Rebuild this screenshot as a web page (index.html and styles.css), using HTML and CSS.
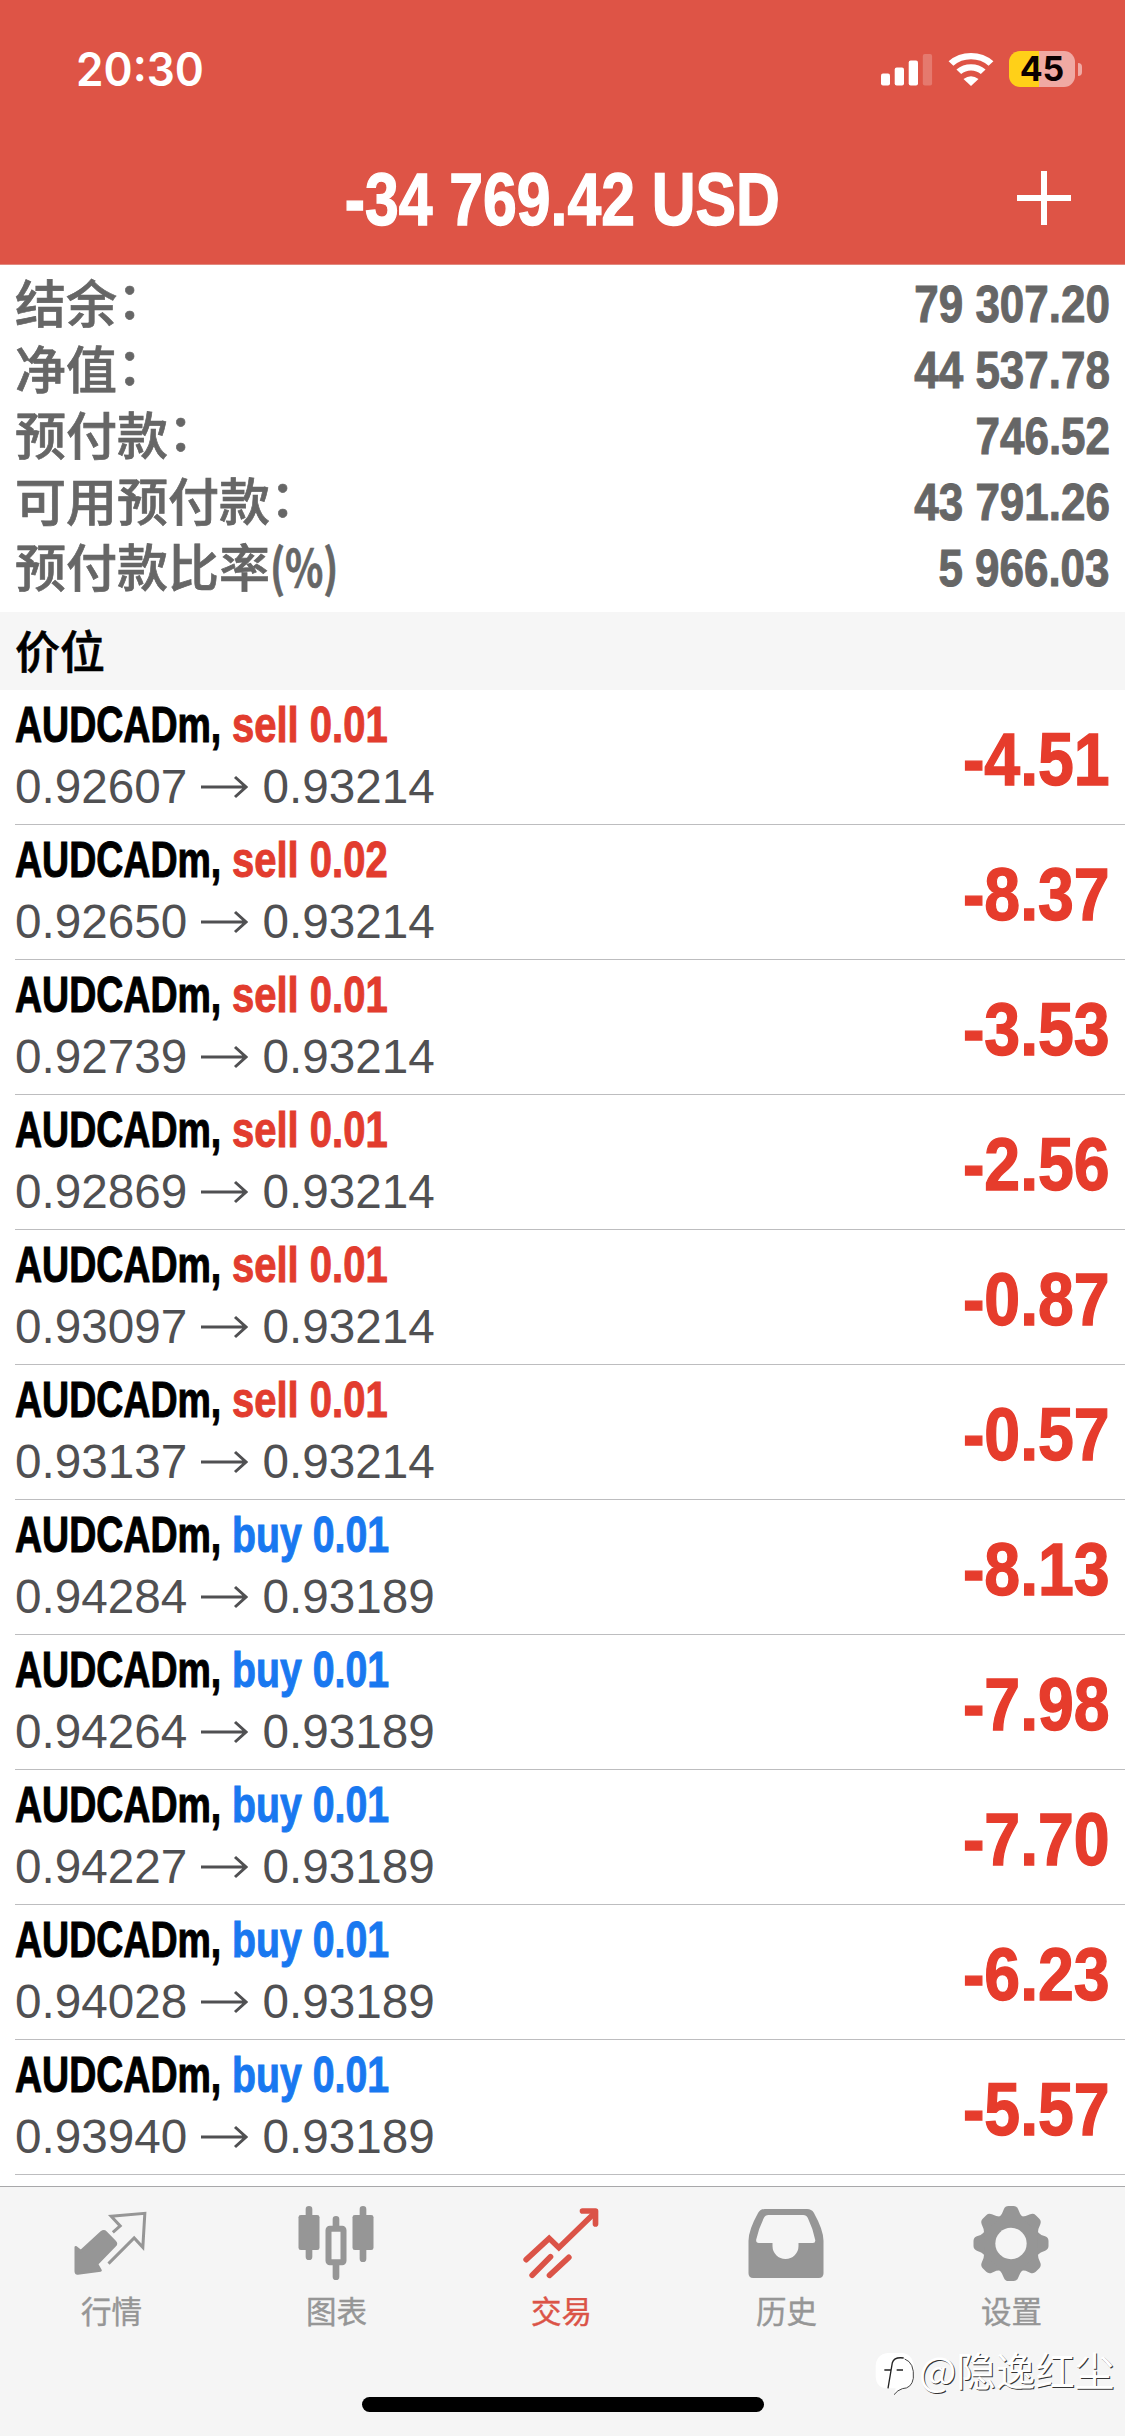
FILE: index.html
```html
<!DOCTYPE html>
<html lang="zh-CN">
<head>
<meta charset="utf-8">
<title>交易</title>
<link rel="stylesheet" href="styles.css">
</head>
<body>
<header class="header">
  <div class="status">
    <span class="time">20:30</span>
    <div class="indicators">
      <svg class="signal" width="52" height="33" viewBox="0 0 52 33" fill="#fff"><rect x="0" y="20.500" width="9" height="12" rx="2"/><rect x="13.700" y="14.500" width="9.300" height="18" rx="2"/><rect x="27.700" y="7.500" width="9.300" height="25" rx="2"/><rect x="41.800" y="1" width="9.300" height="31.500" rx="2" opacity=".22"/></svg>
      <svg class="wifi" width="46" height="34" viewBox="0 0 46 37" preserveAspectRatio="none"><g fill="none" stroke="#fff" stroke-width="7"><path d="M3 12.500A29 29 0 0 1 43 12.500"/><path d="M10.800 21.500A18 18 0 0 1 35.200 21.500"/></g><path fill="#fff" d="M15.500 29.500Q23 23.500 30.500 29.500L23 37Z"/></svg>
      <div class="battery"><span class="level">45</span></div>
      <i class="nub"></i>
    </div>
  </div>
  <div class="titlebar">
    <h1 class="title">-34 769.42 USD</h1>
    <svg class="plus" width="54" height="54" viewBox="0 0 54 54" stroke="#fff" stroke-width="6"><path d="M0 27H54M27 0V54"/></svg>
  </div>
</header>

<section class="summary">
  <div class="sum-row"><span class="label">结余<b class="colon">：</b></span><span class="value">79 307.20</span></div>
  <div class="sum-row"><span class="label">净值<b class="colon">：</b></span><span class="value">44 537.78</span></div>
  <div class="sum-row"><span class="label">预付款<b class="colon">：</b></span><span class="value">746.52</span></div>
  <div class="sum-row"><span class="label">可用预付款<b class="colon">：</b></span><span class="value">43 791.26</span></div>
  <div class="sum-row"><span class="label">预付款比率<b class="percent">(%)</b></span><span class="value">5 966.03</span></div>
</section>

<h2 class="section">价位</h2>

<main class="positions" id="positions"></main>

<nav class="tabs">
  <div class="tab">
    <svg width="80" height="85" viewBox="217.500 120 240 255"><path fill="#969696" stroke="#969696" stroke-width="8" stroke-linejoin="round" d="M229 262L244 274L306 217Q313 211 319 217L346 245Q352 251 346 257L292 312L303 331L235 340Q229 341 229 334Z"/><path fill="none" stroke="#969696" stroke-width="9" d="M340 217L362 198L335 169L436 160L430 262L404 234L327 311"/></svg>
    <span>行情</span>
  </div>
  <div class="tab">
    <svg width="80" height="85" viewBox="892.500 120 240 255"><g stroke="#969696" stroke-width="20" stroke-linecap="round" fill="none"><path d="M928.500 148V290M1009.500 178V202M1009.500 312V350M1090.500 148V296"/></g><g fill="#969696"><rect x="897" y="165" width="63" height="105" rx="7"/><rect x="1059" y="165" width="63" height="105" rx="7"/></g><rect x="987" y="206.500" width="45" height="100" rx="4" fill="#f5f5f5" stroke="#969696" stroke-width="18"/></svg>
    <span>图表</span>
  </div>
  <div class="tab active">
    <svg width="80" height="85" viewBox="367.500 120 240 255"><g fill="none" stroke="#db5347" stroke-width="17" stroke-linecap="round"><path d="M380 299L449 235L478 263L586 158"/><path d="M549 153H588V192" stroke-linejoin="round"/><path d="M398 346L453 290M450 346L508 292"/></g></svg>
    <span>交易</span>
  </div>
  <div class="tab">
    <svg width="80" height="85" viewBox="67.500 120 240 255"><path fill="#969696" fill-rule="evenodd" d="M121 147H248Q261 147 268 158Q297 210 297 242V340Q297 354 283 354H86Q72 354 72 340V242Q72 210 101 158Q108 147 121 147ZM132 165Q122 165 118 174Q102 207 95 239Q94 249 103 249H144V258A39 39 0 0 0 222 258V249H265Q274 249 272 239Q265 205 250 174Q246 165 236 165Z"/></svg>
    <span>历史</span>
  </div>
  <div class="tab">
    <svg width="80" height="85" viewBox="742.500 120 240 255"><g fill="#969696"><circle cx="859.500" cy="250.500" r="88"/><g id="teeth"><path id="tooth" d="M824 172Q834 162 838 148Q842 138 852 138H867Q877 138 881 148Q885 162 895 172Z"/><use href="#tooth" transform="rotate(45 859.500 250.500)"/><use href="#tooth" transform="rotate(90 859.500 250.500)"/><use href="#tooth" transform="rotate(135 859.500 250.500)"/></g><use href="#teeth" transform="rotate(180 859.500 250.500)"/></g><circle cx="859.500" cy="250.500" r="47" fill="#f5f5f5"/></svg>
    <span>设置</span>
  </div>
  <i class="home"></i>
</nav>

<div class="watermark">
  <svg width="40" height="46" viewBox="0 0 120 138"><path d="M38 6H84Q117 12 117 55V82Q112 112 82 113Q68 116 58 130L62 112H36Q4 112 2 76V45Q4 10 38 6Z" fill="#fff"/><path d="M89 24Q119 35 115 82Q110 112 82 113Q68 117 57 131" fill="none" stroke="#444" stroke-width="3"/><path d="M86 21Q58 17 52 35L39 112M28 57H48M65 57H84" fill="none" stroke="#222" stroke-width="4"/></svg>
  <span>@隐逸红尘</span>
</div>
<script src="app.js"></script>
</body>
</html>
```
FILE: styles.css
```css
* { box-sizing: border-box; }
body {
  margin: 0;
  width: 1125px;
  height: 2436px;
  position: relative;
  overflow: hidden;
  display: flex;
  flex-direction: column;
  background: #fff;
  font-family: "Liberation Sans", "Noto Sans CJK SC", sans-serif;
}
.header { height: 265px; background: #de5446; color: #fff; border-bottom: 1px solid #e2897f; flex: none; }
.status { height: 132px; padding: 37px 43px 0 76px; display: flex; justify-content: space-between; }
.time { font: 600 46px/64px Inter, sans-serif; transform: scaleX(.96); transform-origin: left; }
.indicators { display: flex; align-items: center; height: 64px; }
.signal { margin-right: 15px; }
.wifi { margin-right: 15px; }
.battery {
  width: 66px; height: 36px; border-radius: 11px;
  background: linear-gradient(90deg, #ffd018 0 45%, #f0a9a3 45%);
  display: flex; justify-content: center;
}
.level { color: #0b0000; font: 700 34px/36px Inter, sans-serif; }
.nub { width: 4px; height: 13px; margin-left: 3px; border-radius: 0 5px 5px 0; background: #f0a9a3; }
.titlebar { height: 132px; display: grid; grid-template-columns: 1fr auto 1fr; align-items: center; }
.title {
  grid-column: 2; margin: 4px 0 0; font-size: 74px; line-height: 100px; font-weight: 700;
  white-space: nowrap; transform: scaleX(.82); -webkit-text-stroke: 1.4px;
}
.plus { justify-self: end; margin-right: 54px; }

.summary { height: 347px; flex: none; padding: 3px 15px 0; color: #666; }
.sum-row { height: 66px; display: flex; justify-content: space-between; white-space: nowrap; }
.label { font: 500 51px/66px "Noto Sans CJK SC", sans-serif; -webkit-text-stroke: .7px; }
.colon { font-weight: 500; display: inline-block; transform: translateY(-4px); }
.percent { font-weight: 700; display: inline-block; transform: scaleX(.78); transform-origin: left; }
.value { margin-top: 4px; font-size: 51px; line-height: 66px; font-weight: 700; transform: scaleX(.862); transform-origin: right; -webkit-text-stroke: 1px; }

.section { margin: 0; height: 78px; flex: none; padding-left: 15px; background: #f6f6f6; color: #000; font: 500 45px/75px "Noto Sans CJK SC", sans-serif; -webkit-text-stroke: .6px; }

.positions { height: 1496px; flex: none; }
.row { height: 135px; margin-left: 15px; padding: 6px 15px 0 0; border-bottom: 1px solid #bdbdbf; display: flex; justify-content: space-between; }
.name { height: 56px; margin-bottom: 7px; line-height: 59px; font-size: 50px; font-weight: 700; display: flex; white-space: nowrap; -webkit-text-stroke: 1px; }
.symbol { width: 217px; transform: scaleX(.75); transform-origin: left; color: #000; }
.side { transform: scaleX(.8); transform-origin: left; }
.sell { color: #e23c2e; }
.buy { color: #1978f0; transform: scaleX(.785); }
.price { display: flex; align-items: center; height: 56px; line-height: 58px; font-size: 47.7px; color: #505052; white-space: nowrap; }
.arrow { margin: 0 14px 0 13px; }
.profit { color: #e63c2c; font-size: 74px; font-weight: 700; line-height: 127px; transform: scaleX(.87); transform-origin: right; white-space: nowrap; -webkit-text-stroke: 1.4px; }

.tabs { position: relative; height: 250px; flex: none; display: grid; grid-template-columns: repeat(5, 1fr); border-top: 1px solid #a8a8aa; background: #f5f5f5; color: #969696; }
.tab { display: flex; flex-direction: column; align-items: center; padding-top: 13px; font: 400 30.5px/44px "Noto Sans CJK SC", sans-serif; }
.tab svg { margin-right: 1px; }
.tab span { margin: 3px 2px 0 0; -webkit-text-stroke: .4px; }
.active { color: #db5347; }
.home { position: absolute; left: 362px; top: 210px; width: 402px; height: 15px; border-radius: 8px; background: #000; }
.watermark { position: absolute; left: 875px; top: 2341px; display: flex; align-items: center; color: #fff; font: 400 39.5px/56px "Noto Sans CJK SC", sans-serif; text-shadow: 1px 1px 0 #333; white-space: nowrap; }
.watermark svg { margin: 10px 4px 0 0; }
```
FILE: app.js
```js
const positions = [
  ["sell", "0.01", "0.92607", "0.93214", "-4.51"],
  ["sell", "0.02", "0.92650", "0.93214", "-8.37"],
  ["sell", "0.01", "0.92739", "0.93214", "-3.53"],
  ["sell", "0.01", "0.92869", "0.93214", "-2.56"],
  ["sell", "0.01", "0.93097", "0.93214", "-0.87"],
  ["sell", "0.01", "0.93137", "0.93214", "-0.57"],
  ["buy", "0.01", "0.94284", "0.93189", "-8.13"],
  ["buy", "0.01", "0.94264", "0.93189", "-7.98"],
  ["buy", "0.01", "0.94227", "0.93189", "-7.70"],
  ["buy", "0.01", "0.94028", "0.93189", "-6.23"],
  ["buy", "0.01", "0.93940", "0.93189", "-5.57"],
];

document.getElementById("positions").innerHTML = positions.map(([side, volume, open, current, profit]) => `
  <div class="row">
    <div>
      <div class="name"><span class="symbol">AUDCADm,</span><span class="side ${side}">${side} ${volume}</span></div>
      <div class="price">
        <span>${open}</span>
        <svg class="arrow" width="48" height="24" viewBox="0 0 48 24" fill="none" stroke="#505052" stroke-width="3"><path d="M1 12H46M35 2L46 12L35 22"/></svg>
        <span>${current}</span>
      </div>
    </div>
    <div class="profit">${profit}</div>
  </div>`).join("");
```
